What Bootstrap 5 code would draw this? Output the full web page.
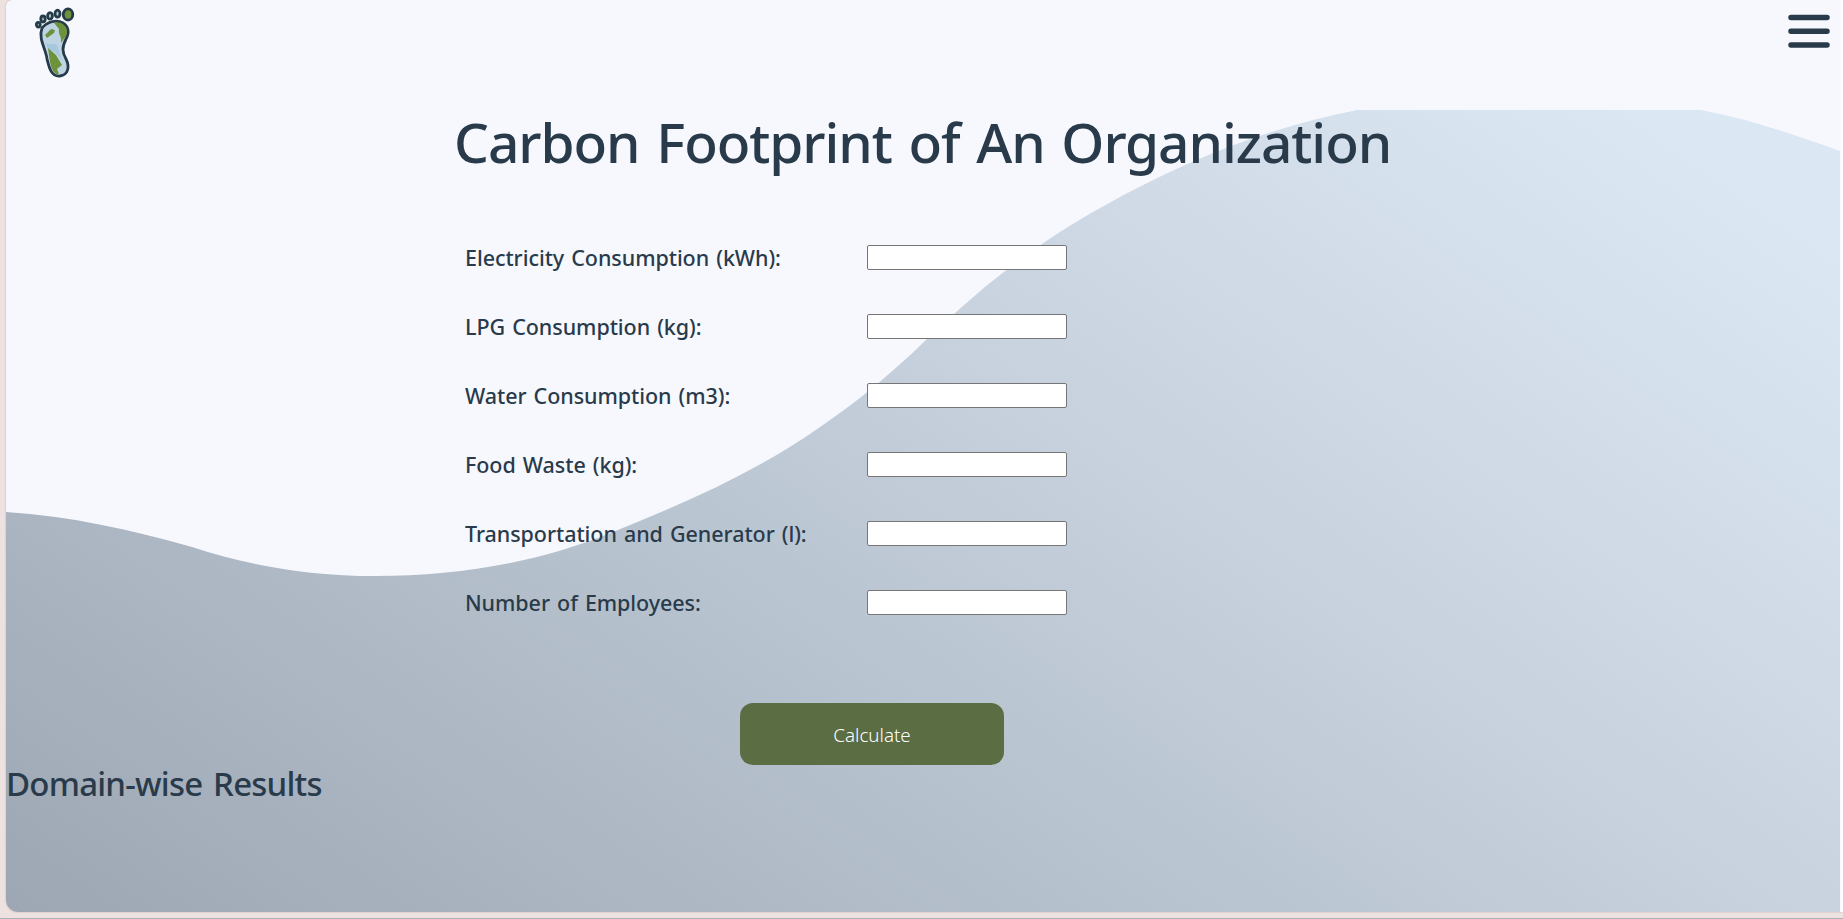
<!DOCTYPE html>
<html lang="en">
<head>
<meta charset="utf-8">
<title>Carbon Footprint of An Organization</title>
<link href="https://cdn.jsdelivr.net/npm/bootstrap@5.3.0/dist/css/bootstrap.min.css" rel="stylesheet">
<style>
body{background:#eee2e0;color:#293b4a;font-family:"Noto Sans","Open Sans",sans-serif;height:919px;border-bottom:1px solid #a9b1bb}
.page-panel{margin-left:6px;height:912px;background:#f7f8fe;border-radius:6px 0 0 12px;box-shadow:0 0 2px #b9aaa8}
.wave{left:0;top:0;width:1837px;height:912px;z-index:0}
.edge-strip{right:0;top:0;width:3px;background:#fbfbff}
.topbar{height:110px;padding:0 11px 0 28px}
.foot{width:44px;height:72px;margin-top:7px}
.menu-btn{margin-top:14px;line-height:0}
h1{font-size:55px;line-height:66px;font-weight:500;letter-spacing:-1.05px;word-spacing:3.4px;margin:-1px 0 0 448px;white-space:nowrap}
.entry-form{margin:48px 0 0 458px;width:603px}
.entry-row{height:69px}
.entry-row label{font-size:21.5px;font-weight:500;line-height:30px;letter-spacing:-.06px;word-spacing:1.6px;padding-left:1px;white-space:nowrap}
.entry-row input{width:200px;height:25px;border:1px solid #767676;border-radius:2px;background:#fff}
.calc-btn{width:264px;height:62px;margin:66px 0 0 734px;background:#5b6d43;border-radius:13px;color:#fff;font-size:18.8px;font-weight:300;border:0;padding-top:3px}
h2{font-size:33px;line-height:40px;font-weight:500;letter-spacing:-.8px;word-spacing:3px;white-space:nowrap;margin:-1px 0 0 0}
</style>
</head>
<body class="overflow-hidden">
<div class="page-panel position-relative overflow-hidden">
  <svg class="wave position-absolute" viewBox="6 0 1837 912" aria-hidden="true">
    <defs><linearGradient id="haze" gradientUnits="userSpaceOnUse" x1="6" y1="912" x2="922" y2="-405"><stop offset="0" stop-color="#9da7b3"/><stop offset=".45" stop-color="#bac5d2"/><stop offset=".62" stop-color="#c7d1dd"/><stop offset=".8" stop-color="#d2dce9"/><stop offset="1" stop-color="#dbe8f4"/></linearGradient></defs>
    <path fill="url(#haze)" d="M6 512C70 516 132 530 192 547C250 566 310 576 375 576C460 576 540 562 613 532C675 507 732 482 785 450C840 416 885 380 927 339C985 284 1035 244 1102 207C1180 163 1265 128 1357 110H1701C1749 119 1792 134 1840 151V912H6Z"/>
  </svg>
  <div class="edge-strip position-absolute h-100"></div>
  <div class="position-relative">
    <header class="topbar d-flex justify-content-between align-items-start">
      <svg class="foot" viewBox="0 0 44 72" fill="none" stroke="#263b49" stroke-width="2.8">
        <path fill="#bed4e2" d="M8 21C13 15 22 12 29 16C34 19 36 25 32 32C28 40 28 45 32 52C36 60 34 68 26 69C17 70 15 60 13 52C12 42 4 32 8 21Z"/>
        <path fill="#a4c8dd" stroke="none" d="M12 36C17 39 19 35 23 38C25 43 26 49 29 54L21 45 14 42Z"/>
        <path fill="#6e913b" stroke="none" d="M20 16C29 13 36 22 32 29L27 36C28 29 24 28 25 22ZM11 28L17 22 21 23 20 26 13 31ZM14 41L22 48 28 58 23 62 25 67C17 68 16 55 14 41Z"/>
        <ellipse cx="34" cy="7.5" rx="4.8" ry="5.6" fill="#6e913b"/>
        <g fill="#b5cdcc"><ellipse cx="23.5" cy="6.7" rx="2.5" ry="3.5"/><ellipse cx="16" cy="8.9" rx="2.4" ry="3.3"/><ellipse cx="9" cy="12" rx="2.2" ry="3"/><ellipse cx="4.3" cy="17.7" rx="1.9" ry="2.3"/></g>
      </svg>
      <div class="menu-btn"><svg width="44" height="36" viewBox="0 0 44 36" stroke="#293b4a" stroke-width="5.5" stroke-linecap="round"><path d="M3 3.5H39M3 17.3H39M3 31H39"/></svg></div>
    </header>
    <h1>Carbon Footprint of An Organization</h1>
    <form class="entry-form">
      <div class="entry-row d-flex justify-content-between align-items-center"><label for="a">Electricity Consumption (kWh):</label><input id="a"></div>
      <div class="entry-row d-flex justify-content-between align-items-center"><label for="b">LPG Consumption (kg):</label><input id="b"></div>
      <div class="entry-row d-flex justify-content-between align-items-center"><label for="c">Water Consumption (m3):</label><input id="c"></div>
      <div class="entry-row d-flex justify-content-between align-items-center"><label for="d">Food Waste (kg):</label><input id="d"></div>
      <div class="entry-row d-flex justify-content-between align-items-center"><label for="e">Transportation and Generator (l):</label><input id="e"></div>
      <div class="entry-row d-flex justify-content-between align-items-center"><label for="f">Number of Employees:</label><input id="f"></div>
    </form>
    <button class="calc-btn d-block" type="button">Calculate</button>
    <h2>Domain-wise Results</h2>
  </div>
</div>
<script src="https://cdn.jsdelivr.net/npm/bootstrap@5.3.0/dist/js/bootstrap.bundle.min.js"></script>
</body>
</html>
